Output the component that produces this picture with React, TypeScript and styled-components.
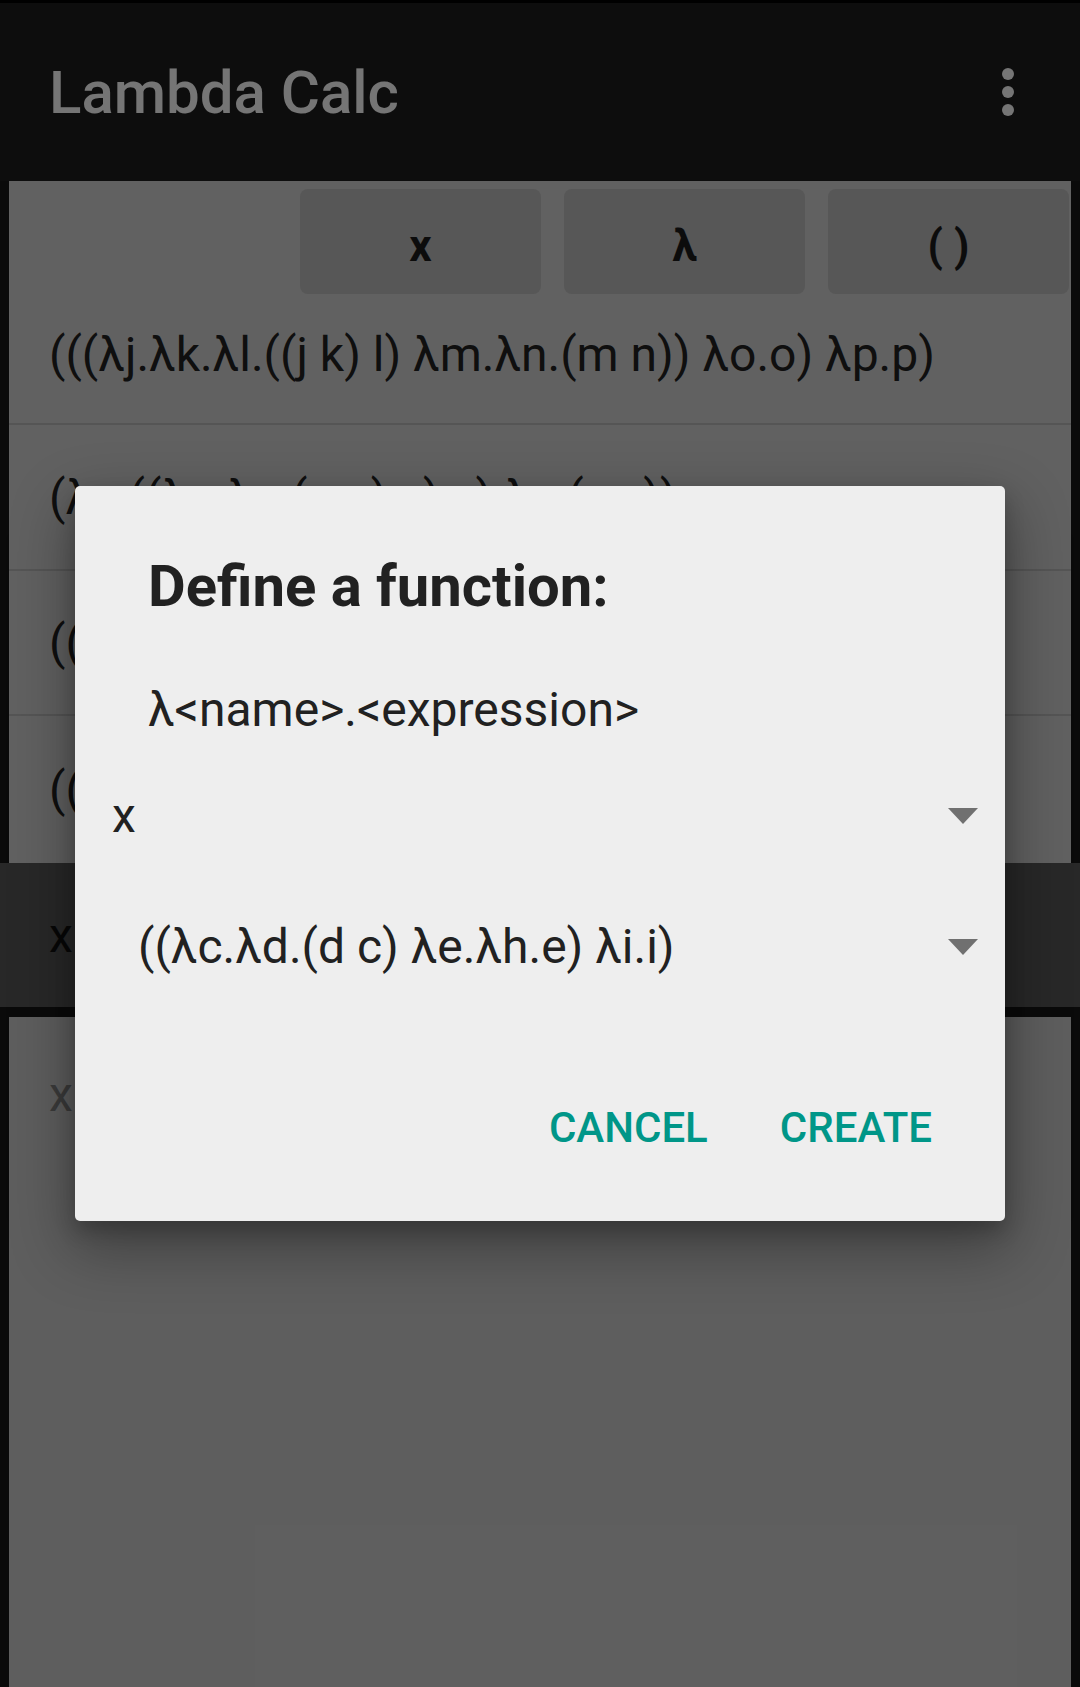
import React from "react";
import styled, { createGlobalStyle } from "styled-components";

const GlobalStyle = createGlobalStyle`
  html, body {
    margin: 0;
    padding: 0;
    background: #161616;
  }
  body {
    font-family: Roboto, "Noto Sans", "Liberation Sans", sans-serif;
  }
`;

const Page = styled.div`
  position: relative;
  height: 1687px;
  display: flex;
  flex-direction: column;
  background: #161616;
  overflow: hidden;
`;

const AppBar = styled.header`
  height: 178px;
  border-top: 3px solid #000;
  background: #1e1e1e;
  display: flex;
  align-items: center;
  justify-content: space-between;
  padding: 0 66px 0 49px;
  flex: none;
`;

const AppTitle = styled.h1`
  margin: 0;
  font-size: 60px;
  font-weight: 500;
  color: #ffffff;
`;

const Workspace = styled.div`
  margin: 0 9px;
  background: #d3d3d3;
  flex: none;
`;

const KeyRow = styled.div`
  height: 113px;
  box-sizing: border-box;
  display: flex;
  justify-content: flex-end;
  gap: 23px;
  padding: 8px 2px 0 0;
`;

const Key = styled.button`
  width: 241px;
  height: 105px;
  border: none;
  border-radius: 8px;
  background: #bdbdbd;
  color: #1c1c1c;
  font-family: inherit;
  font-size: 44px;
  font-weight: 700;
  padding: 8px 0 0;
  display: flex;
  align-items: center;
  justify-content: center;
`;

const ExprRow = styled.div<{ $h: number; $pb?: number; $last?: boolean }>`
  height: ${(p) => p.$h}px;
  box-sizing: border-box;
  display: flex;
  align-items: center;
  padding: 0 0 ${(p) => p.$pb || 0}px 40px;
  border-bottom: ${(p) => (p.$last ? "none" : "2px solid #b9b9b9")};
  font-size: 48px;
  color: #212121;
  white-space: nowrap;
  overflow: hidden;
`;

const InputBar = styled.div`
  height: 144px;
  flex: none;
  background: #575757;
  display: flex;
  align-items: center;
  padding-left: 49px;
  font-size: 48px;
  color: #111;
`;

const OutputPanel = styled.div`
  flex: 1;
  margin: 10px 9px 0;
  background: #cecece;
  padding: 49px 0 0 40px;
  font-size: 48px;
  color: #828282;
`;

const Scrim = styled.div`
  position: absolute;
  inset: 0;
  background: rgba(0, 0, 0, 0.54);
  display: flex;
  justify-content: center;
  align-items: flex-start;
  padding-top: 486px;
  box-sizing: border-box;
`;

const Dialog = styled.div`
  width: 930px;
  background: #eeeeee;
  border-radius: 5px;
  box-shadow: 0 24px 60px 6px rgba(0, 0, 0, 0.32), 0 10px 20px rgba(0, 0, 0, 0.2);
`;

const DialogTitle = styled.h2`
  margin: 66px 0 0 73px;
  font-size: 58px;
  line-height: 68px;
  font-weight: 700;
  color: #212121;
`;

const DialogMessage = styled.p`
  margin: 62px 0 0 73px;
  font-size: 48px;
  line-height: 56px;
  color: #212121;
`;

const Spinner = styled.div<{ $top: number; $indent: number }>`
  height: 56px;
  margin-top: ${(p) => p.$top}px;
  padding: 0 27px 0 ${(p) => p.$indent}px;
  display: flex;
  align-items: center;
  justify-content: space-between;
  font-size: 48px;
  line-height: 56px;
  color: #212121;
`;

const Actions = styled.div`
  display: flex;
  justify-content: flex-end;
  gap: 72px;
  margin-top: 128px;
  padding: 0 73px 68px 0;
`;

const ActionButton = styled.span`
  font-size: 42px;
  line-height: 50px;
  font-weight: 500;
  color: #009688;
`;

const Overflow = () => (
  <svg width="12" height="48" viewBox="0 0 12 48">
    <circle cx="6" cy="6" r="6" fill="#ffffff" />
    <circle cx="6" cy="24" r="6" fill="#ffffff" />
    <circle cx="6" cy="42" r="6" fill="#ffffff" />
  </svg>
);

const Caret = () => (
  <svg width="30" height="16" viewBox="0 0 30 16">
    <polygon points="0,0 30,0 15,16" fill="#707070" />
  </svg>
);

const history = [
  "(((λj.λk.λl.((j k) l) λm.λn.(m n)) λo.o) λp.p)",
  "(λx.((λa.λc.(a c) x) x) λz.(z z))",
  "((λa.λb.(b a) λc.λd.c) λe.e)",
  "((λf.λg.(f g) λu.u) λv.v)",
];

const rowHeights = [131, 146, 145, 147];

export default function App() {
  return (
    <>
      <GlobalStyle />
      <Page>
        <AppBar>
          <AppTitle>Lambda Calc</AppTitle>
          <Overflow />
        </AppBar>
        <Workspace>
          <KeyRow>
            <Key>x</Key>
            <Key>λ</Key>
            <Key>( )</Key>
          </KeyRow>
          {history.map((expr, i) => (
            <ExprRow
              key={i}
              $h={rowHeights[i]}
              $pb={i === 0 ? 8 : 0}
              $last={i === history.length - 1}
            >
              {expr}
            </ExprRow>
          ))}
        </Workspace>
        <InputBar>x</InputBar>
        <OutputPanel>x</OutputPanel>
        <Scrim>
          <Dialog>
            <DialogTitle>Define a function:</DialogTitle>
            <DialogMessage>λ&lt;name&gt;.&lt;expression&gt;</DialogMessage>
            <Spinner $top={50} $indent={37}>
              <span>x</span>
              <Caret />
            </Spinner>
            <Spinner $top={75} $indent={63}>
              <span>((λc.λd.(d c) λe.λh.e) λi.i)</span>
              <Caret />
            </Spinner>
            <Actions>
              <ActionButton>CANCEL</ActionButton>
              <ActionButton>CREATE</ActionButton>
            </Actions>
          </Dialog>
        </Scrim>
      </Page>
    </>
  );
}
